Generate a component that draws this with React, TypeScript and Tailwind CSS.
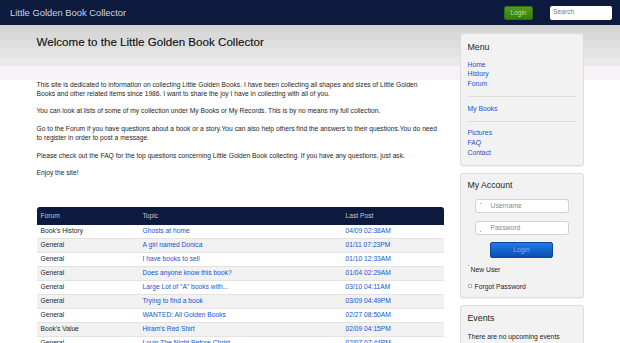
import React from "react";

const rows: [string, string, string][] = [
  ["Book's History", "Ghosts at home", "04/09 02:38AM"],
  ["General", "A girl named Donica", "01/11 07:23PM"],
  ["General", "I have books to sell", "01/10 12:33AM"],
  ["General", "Does anyone know this book?", "01/04 02:29AM"],
  ["General", 'Large Lot of "A" books with...', "03/10 04:11AM"],
  ["General", "Trying to find a book", "03/09 04:49PM"],
  ["General", "WANTED: All Golden Books", "02/27 08:50AM"],
  ["Book's Value", "Hiram's Red Shirt", "02/09 04:15PM"],
  ["General", "Lovin The Night Before Christ...", "02/07 07:44PM"],
];

function Box({ children, className = "" }: { children: React.ReactNode; className?: string }) {
  return (
    <div
      className={
        "bg-[#f2f2f2] border border-[#dcdcdc] rounded-[3px] shadow-[0_1px_1px_rgba(0,0,0,0.06)] px-[7px] " +
        className
      }
    >
      {children}
    </div>
  );
}

export default function App() {
  return (
    <div className="font-['Liberation_Sans',Arial,sans-serif] text-[#222] bg-white min-h-[343px]">
      <header className="h-[25px] bg-[#0b1a3d] flex items-center pl-[10px] pr-[8px]">
        <div className="text-[9.4px] leading-[12px] text-[#cdd3e0]">Little Golden Book Collector</div>
        <div className="ml-auto h-[14px] w-[29px] rounded-[2px] border border-[#2f6e0d] bg-[linear-gradient(to_bottom,#4f9d1c,#367f0f)] flex items-center justify-center text-[6.5px] text-[#b9dca2]">
          Login
        </div>
        <div className="ml-[17px] h-[14px] w-[62px] rounded-[2px] bg-white flex items-center pl-[3px] text-[6.7px] text-[#777]">
          Search
        </div>
      </header>

      <main className="bg-[linear-gradient(to_bottom,#d4d4d4_0px,#d4d4d4_7px,#d9d9d9_7px,#d9d9d9_15px,#dedede_15px,#dedede_23px,#e3e3e3_23px,#e3e3e3_32px,#e9e9e9_32px,#e9e9e9_41px,#f6f4f8_41px,#f6f4f8_55px,#ffffff_55px)]">
        <div className="w-[547px] mx-auto flex gap-[16px] pt-[8px]">
          {/* left column */}
          <div className="w-[407px] shrink-0">
            <h1 className="mt-[2px] text-[11.6px] leading-[14px] text-[#111] [-webkit-text-stroke:0.15px_#111]">
              Welcome to the Little Golden Book Collector
            </h1>
            <div className="mt-[30.5px] text-[6.7px] leading-[9px] text-[#1e1e1e]">
              <p className="mb-[8.7px]">
                This site is dedicated to information on collecting Little Golden Books. I have been collecting all
                shapes and sizes of Little Golden
                <br />
                Books and other related items since 1986. I want to share the joy I have in collecting with all of
                you.
              </p>
              <p className="mb-[8.7px]">
                You can look at lists of some of my collection under My Books or My Records. This is by no means my
                full collection.
              </p>
              <p className="mb-[8.7px]">
                Go to the Forum if you have questions about a book or a story.You can also help others find the
                answers to their questions.You do need to register in order to post a message.
              </p>
              <p className="mb-[8.7px]">
                Please check out the FAQ for the top questions concerning Little Golden Book collecting. If you have
                any questions, just ask.
              </p>
              <p>Enjoy the site!</p>
            </div>

            <div className="mt-[29.7px] text-[6.7px]">
              <div className="h-[18px] bg-[#0b1a3d] rounded-t-[3px] grid grid-cols-[102px_203px_102px] items-center">
                <div className="pl-[4px] text-[#c3c9d6]">Forum</div>
                <div className="pl-[4px] text-[#c3c9d6]">Topic</div>
                <div className="pl-[4px] text-[#c3c9d6]">Last Post</div>
              </div>
              {rows.map((r, i) => (
                <div
                  key={i}
                  className={
                    "h-[14px] grid grid-cols-[102px_203px_102px] items-center border-b border-[#e3e3e3] " +
                    (i % 2 === 1 ? "bg-[#f1f1f1]" : "bg-white")
                  }
                >
                  <div className="pl-[4px] text-[#1e1e1e]">{r[0]}</div>
                  <div className="pl-[4px] text-[#1456d0]">{r[1]}</div>
                  <div className="pl-[4px] text-[#1456d0]">{r[2]}</div>
                </div>
              ))}
            </div>
          </div>

          {/* sidebar */}
          <aside className="w-[124px] shrink-0 flex flex-col gap-[7px]">
            <Box className="pt-[7.5px] pb-[7.5px]">
              <div className="text-[8.8px] leading-[11px] text-[#1e1e1e]">Menu</div>
              <div className="mt-[7px] text-[6.8px] leading-[9.75px] text-[#1456d0]">
                <div>Home</div>
                <div>History</div>
                <div>Forum</div>
              </div>
              <div className="mt-[7.25px] h-[1px] bg-[#dcdcdc]" />
              <div className="mt-[6.5px] text-[6.8px] leading-[9.75px] text-[#1456d0]">
                <div>My Books</div>
              </div>
              <div className="mt-[7.25px] h-[1px] bg-[#dcdcdc]" />
              <div className="mt-[6.5px] text-[6.8px] leading-[9.75px] text-[#1456d0]">
                <div>Pictures</div>
                <div>FAQ</div>
                <div>Contact</div>
              </div>
            </Box>

            <Box className="pt-[6px] pb-[6px]">
              <div className="text-[8.7px] leading-[11px] text-[#1e1e1e]">My Account</div>
              <div className="mt-[8px] flex flex-col items-center gap-[7.6px]">
                <div className="relative w-[94px] h-[14.5px] bg-white border border-[#d2d2d2] rounded-[3px] flex items-center pl-[15px] text-[6.8px] text-[#8a8a8a]">
                  <span className="absolute left-[4px] top-[3px] w-[1px] h-[1px] bg-[#aaa]" />
                  Username
                </div>
                <div className="relative w-[94px] h-[14.5px] bg-white border border-[#d2d2d2] rounded-[3px] flex items-center pl-[15px] text-[6.8px] text-[#8a8a8a]">
                  <span className="absolute left-[4px] top-[9px] w-[1px] h-[1px] bg-[#aaa]" />
                  Password
                </div>
              </div>
              <div className="mt-[7px] flex justify-center">
                <div className="w-[63px] h-[15.5px] rounded-[2px] bg-[linear-gradient(to_bottom,#1f7ae2,#0b4fb3)] border border-[#0a489f] flex items-center justify-center text-[6.8px] text-[#7fb0ee]">
                  Login
                </div>
              </div>
              <div className="mt-[6.8px] text-[6.8px] leading-[9.75px] text-[#1e1e1e]">
                <div className="flex items-start">
                  <span className="w-[1px] h-[1px] bg-[#999] mr-[2px]" />
                  <span>New User</span>
                </div>
                <div className="mt-[7.2px] flex items-center">
                  <span className="w-[4px] h-[4px] border border-[#b5b5b5] bg-white mr-[3px]" />
                  <span>Forgot Password</span>
                </div>
              </div>
            </Box>

            <Box className="pt-[7px] pb-[8px]">
              <div className="text-[8.8px] leading-[11px] text-[#1e1e1e]">Events</div>
              <div className="mt-[7.6px] text-[6.8px] leading-[9.75px] text-[#1e1e1e]">There are no upcoming events</div>
            </Box>
          </aside>
        </div>
      </main>
    </div>
  );
}
